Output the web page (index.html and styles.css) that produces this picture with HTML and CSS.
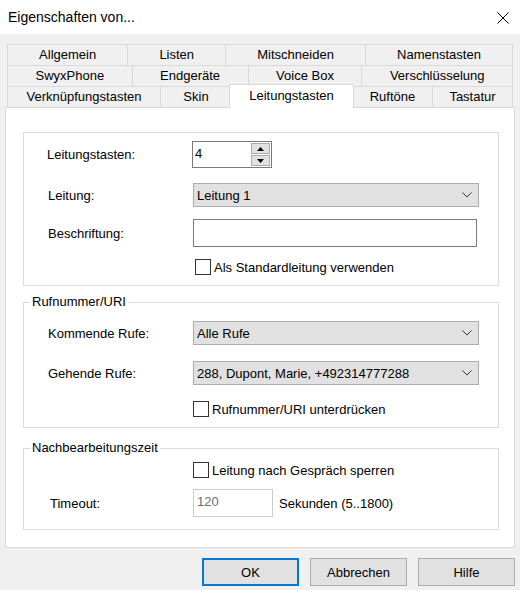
FILE: index.html
```html
<!DOCTYPE html>
<html lang="de">
<head>
  <meta charset="UTF-8" />
  <meta name="viewport" content="width=device-width, initial-scale=1.0" />
  <title>Eigenschaften von...</title>
  <link rel="stylesheet" href="styles.css">
</head>
<body>
  <div class="titlebar">
    <span class="title">Eigenschaften von...</span>
    <svg class="close" width="12" height="12" viewBox="0 0 12 12">
      <path d="M0.5 0.5 L11.5 11.5 M11.5 0.5 L0.5 11.5" stroke="#000" stroke-width="1" fill="none" />
    </svg>
  </div>

  <div class="tabs">
    <div class="tab-row">
      <div class="tab">Allgemein</div>
      <div class="tab">Listen</div>
      <div class="tab">Mitschneiden</div>
      <div class="tab">Namenstasten</div>
    </div>
    <div class="tab-row">
      <div class="tab">SwyxPhone</div>
      <div class="tab">Endgeräte</div>
      <div class="tab">Voice Box</div>
      <div class="tab">Verschlüsselung</div>
    </div>
    <div class="tab-row front">
      <div class="tab tab-keys">Verknüpfungstasten</div>
      <div class="tab tab-skin">Skin</div>
      <div class="tab active">Leitungstasten</div>
      <div class="tab tab-rings">Ruftöne</div>
      <div class="tab">Tastatur</div>
    </div>
  </div>

  <div class="panel">
    <div class="group first">
      <div class="row spin-row">
        <label class="field-label">Leitungstasten:</label>
        <div class="spin">
          <span class="spin-value">4</span>
          <div class="spin-buttons">
            <span class="spin-btn">
              <svg width="7" height="4" viewBox="0 0 7 4"><path d="M3.5 0 L7 4 L0 4 Z" fill="#000" /></svg>
            </span>
            <span class="spin-btn">
              <svg width="7" height="4" viewBox="0 0 7 4"><path d="M0 0 L7 0 L3.5 4 Z" fill="#000" /></svg>
            </span>
          </div>
        </div>
      </div>
      <div class="row combo-row">
        <label class="field-label">Leitung:</label>
        <div class="combo">
          <span>Leitung 1</span>
          <svg class="chevron" width="10" height="6" viewBox="0 0 10 6"><path d="M0.5 0.5 L5 5 L9.5 0.5" stroke="#333" fill="none" /></svg>
        </div>
      </div>
      <div class="row text-row">
        <label class="field-label">Beschriftung:</label>
        <div class="textbox"></div>
      </div>
      <div class="check-row indent">
        <span class="checkbox"></span>
        <span>Als Standardleitung verwenden</span>
      </div>
    </div>

    <fieldset class="group second">
      <legend>Rufnummer/URI</legend>
      <div class="group-body">
        <div class="row combo-row">
          <label class="field-label">Kommende Rufe:</label>
          <div class="combo">
            <span>Alle Rufe</span>
            <svg class="chevron" width="10" height="6" viewBox="0 0 10 6"><path d="M0.5 0.5 L5 5 L9.5 0.5" stroke="#333" fill="none" /></svg>
          </div>
        </div>
        <div class="row combo-row">
          <label class="field-label">Gehende Rufe:</label>
          <div class="combo">
            <span>288, Dupont, Marie, +492314777288</span>
            <svg class="chevron" width="10" height="6" viewBox="0 0 10 6"><path d="M0.5 0.5 L5 5 L9.5 0.5" stroke="#333" fill="none" /></svg>
          </div>
        </div>
        <div class="check-row">
          <span class="checkbox"></span>
          <span>Rufnummer/URI unterdrücken</span>
        </div>
      </div>
    </fieldset>

    <fieldset class="group third">
      <legend>Nachbearbeitungszeit</legend>
      <div class="group-body">
        <div class="check-row">
          <span class="checkbox"></span>
          <span>Leitung nach Gespräch sperren</span>
        </div>
        <div class="row timeout-row">
          <label class="field-label">Timeout:</label>
          <div class="textbox small disabled">120</div>
          <span class="unit">Sekunden (5..1800)</span>
        </div>
      </div>
    </fieldset>
  </div>

  <div class="buttons">
    <button type="button" class="default">OK</button>
    <button type="button">Abbrechen</button>
    <button type="button">Hilfe</button>
  </div>
</body>
</html>
```

FILE: styles.css
```css
* {
  box-sizing: border-box;
}

body {
  margin: 0;
  width: 520px;
  height: 590px;
  overflow: hidden;
  background-color: #f0f0f0;
  font-family: "Liberation Sans", Arial, sans-serif;
  font-size: 13px;
  color: #000;
}

/* window caption */
.titlebar {
  height: 34px;
  background-color: #ffffff;
  display: flex;
  align-items: center;
  justify-content: space-between;
  padding: 0 11px 0 8px;
}

.title {
  font-size: 14px;
}

.close {
  display: block;
  margin-top: 1px;
}

/* three rows of tabs */
.tabs {
  margin: 10px 7px 0;
}

.tab-row {
  display: flex;
}

.tab {
  flex: 1 1 auto;
  height: 21px;
  line-height: 20px;
  text-align: center;
  white-space: nowrap;
  border-top: 1px solid #d9d9d9;
  border-left: 1px solid #d9d9d9;
  background-color: #f0f0f0;
}

.tab:last-child {
  border-right: 1px solid #d9d9d9;
}

.front .tab-keys {
  flex: 0 0 153px;
}

.front .tab-skin {
  flex: 0 0 71px;
}

.front .tab-rings {
  flex: 0 0 80px;
}

.tab.active {
  position: relative;
  z-index: 1;
  flex: 0 0 125px;
  height: 24px;
  line-height: 21px;
  margin: -2px -2px -1px;
  background-color: #ffffff;
  border-right: 1px solid #d9d9d9;
}

/* page of the selected tab */
.panel {
  margin: 0 5px;
  background-color: #ffffff;
  border: 1px solid #d9d9d9;
  padding: 24px 15px 17px 17px;
}

.group {
  margin: 0;
  border: 1px solid #dcdcdc;
  min-width: 0;
}

.group.first {
  padding: 8px 0 10px 24px;
}

fieldset.group {
  padding: 0;
}

.group.second {
  margin-top: 8px;
}

.group.third {
  margin-top: 12px;
}

legend {
  margin-left: 6px;
  padding: 0 2px;
  line-height: 16px;
}

.second .group-body {
  padding: 11px 0 10px 24px;
}

.third .group-body {
  padding: 6px 0 12px 24px;
}

.row {
  display: flex;
  align-items: center;
}

.field-label {
  width: 145px;
  flex-shrink: 0;
}

.spin-row .field-label {
  margin-left: -1px;
}

.first .combo-row {
  margin-top: 15px;
}

.second .combo-row + .combo-row {
  margin-top: 16px;
}

.text-row,
.first .check-row {
  margin-top: 12px;
}

.second .check-row {
  margin-top: 16px;
}

.timeout-row {
  margin-top: 11px;
}

.timeout-row .field-label {
  margin-left: 2px;
  width: 143px;
}

/* up-down control */
.spin {
  width: 80px;
  height: 27px;
  display: flex;
  border: 1px solid #7a7a7a;
}

.spin-value {
  flex: 1;
  padding: 4px 0 0 2px;
  line-height: 15px;
}

.spin-buttons {
  width: 21px;
  display: flex;
  flex-direction: column;
  gap: 1px;
  padding: 1px;
}

.spin-btn {
  flex: 1;
  display: flex;
  align-items: center;
  justify-content: center;
  background-color: #e1e1e1;
  border: 1px solid #adadad;
}

.spin-btn svg {
  display: block;
}

/* drop-down list */
.combo {
  width: 286px;
  height: 24px;
  display: flex;
  align-items: center;
  justify-content: space-between;
  padding: 0 6px 0 3px;
  background-color: #e1e1e1;
  border: 1px solid #adadad;
}

.chevron {
  display: block;
}

.textbox {
  width: 284px;
  height: 28px;
  border: 1px solid #7a7a7a;
  background-color: #ffffff;
}

.textbox.small {
  width: 80px;
}

.textbox.disabled {
  border-color: #cccccc;
  color: #6d6d6d;
  padding: 4px 0 0 3px;
  line-height: 15px;
}

.unit {
  margin-left: 6px;
}

.check-row {
  display: flex;
  align-items: center;
  height: 16px;
  margin-left: 145px;
  gap: 3px;
}

.check-row.indent {
  margin-left: 147px;
}

.checkbox {
  width: 16px;
  height: 16px;
  border: 1px solid #333333;
  background-color: #ffffff;
}

/* dialog buttons */
.buttons {
  display: flex;
  justify-content: flex-end;
  gap: 11px;
  margin: 10px 5px 0 0;
}

.buttons button {
  width: 97px;
  height: 28px;
  padding: 0;
  font-family: inherit;
  font-size: 13px;
  color: #000;
  background-color: #e1e1e1;
  border: 1px solid #adadad;
}

.buttons button.default {
  border: 2px solid #0078d7;
}
```
